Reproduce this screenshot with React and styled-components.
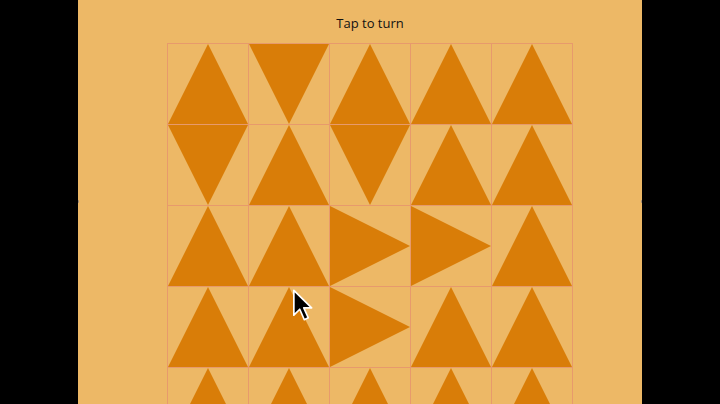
import React from "react";
import styled, { createGlobalStyle } from "styled-components";

const Global = createGlobalStyle`
  html, body {
    margin: 0;
    padding: 0;
    background: #000000;
    overflow: hidden;
  }
`;

const layout = [
  ["up", "down", "up", "up", "up"],
  ["down", "up", "down", "up", "up"],
  ["up", "up", "right", "right", "up"],
  ["up", "up", "right", "up", "up"],
  ["up", "up", "up", "up", "up"],
];

const points = {
  up: "40,0 80,80 0,80",
  down: "0,0 80,0 40,80",
  right: "0,0 80,40 0,80",
  left: "80,0 0,40 80,80",
};

function Triangle({ dir }) {
  return (
    <Shape viewBox="0 0 80 80" preserveAspectRatio="none">
      <polygon points={points[dir]} fill="#d97d08" />
    </Shape>
  );
}

function Pointer() {
  return (
    <Cursor viewBox="0 0 16 26" width="22" height="34">
      <path
        d="M1 1 L1 20 L5.5 15.5 L9 23.5 L12 22 L8.6 14.4 L14.6 14.4 Z"
        fill="#000"
        stroke="#fff"
        strokeWidth="1.3"
        strokeLinejoin="round"
      />
    </Cursor>
  );
}

export default function App() {
  return (
    <>
      <Global />
      <Screen>
        <Panel>
          <Title>Tap to turn</Title>
          <Board>
            {layout.map((row, r) =>
              row.map((dir, c) => (
                <Cell key={r + "-" + c}>
                  <Triangle dir={dir} />
                </Cell>
              ))
            )}
          </Board>
          <Pointer />
          <EdgeDot side="left" />
          <EdgeDot side="right" />
        </Panel>
      </Screen>
    </>
  );
}

const Screen = styled.div`
  width: 720px;
  height: 404px;
  display: flex;
  justify-content: flex-start;
  background: #000000;
  overflow: hidden;
`;

const Panel = styled.div`
  position: relative;
  width: 564px;
  height: 404px;
  margin-left: 78px;
  background: #edb866;
  display: flex;
  flex-direction: column;
  padding-left: 89px;
  box-sizing: border-box;
  overflow: hidden;
`;

const Title = styled.div`
  flex-shrink: 0;
  width: 406px;
  height: 43px;
  display: flex;
  align-items: center;
  justify-content: center;
  padding-top: 2px;
  box-sizing: border-box;
  font-family: "Open Sans", "DejaVu Sans", sans-serif;
  font-size: 13px;
  color: #111111;
`;

const Board = styled.div`
  flex-shrink: 0;
  display: grid;
  grid-template-columns: repeat(5, 80px);
  grid-auto-rows: 80px;
  gap: 1px;
  padding: 1px;
  width: 406px;
  box-sizing: border-box;
  background: #e79a6c;
`;

const Cell = styled.div`
  background: #edb866;
  display: flex;
`;

const Shape = styled.svg`
  width: 80px;
  height: 80px;
  display: block;
`;

const Cursor = styled.svg`
  position: absolute;
  left: 214px;
  top: 289px;
`;

const EdgeDot = styled.span`
  position: absolute;
  top: 200px;
  ${(p) => (p.side === "left" ? "left: -1px;" : "right: -1px;")}
  width: 2px;
  height: 3px;
  background: #9a8a7a;
  border-radius: 1px;
`;
